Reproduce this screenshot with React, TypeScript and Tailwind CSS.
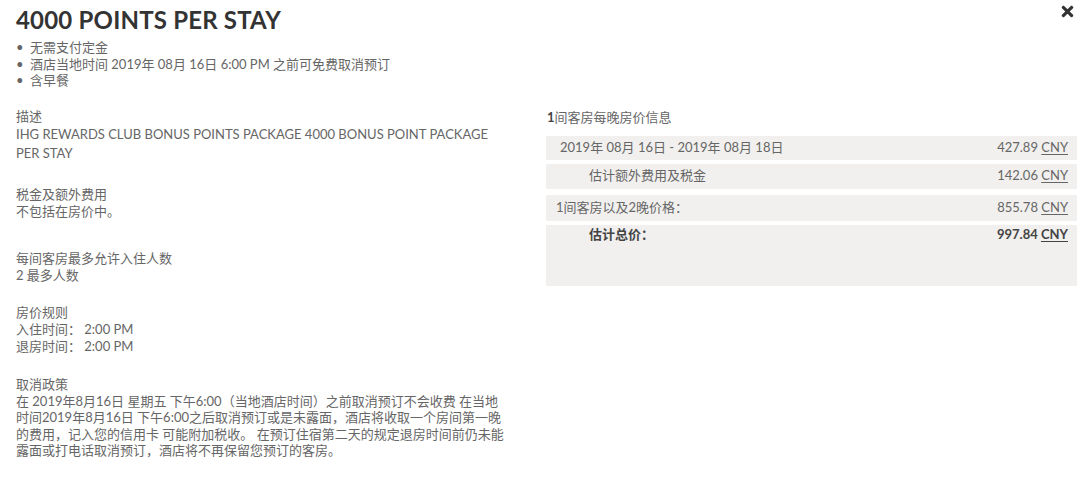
import React from "react";
import { FaTimes } from "react-icons/fa";

const font = {
  fontFamily:
    '"Lato", "Noto Sans CJK SC", "Noto Sans", sans-serif',
};

function Section({ label, children, className = "" }: { label: string; children: React.ReactNode; className?: string }) {
  return (
    <div className={className}>
      <div className="leading-[17px]">{label}</div>
      {children}
    </div>
  );
}

function PriceRow({
  label,
  amount,
  className,
  labelClass,
  bold = false,
}: {
  label: React.ReactNode;
  amount: string;
  className: string;
  labelClass: string;
  bold?: boolean;
}) {
  return (
    <div className={`flex justify-between bg-[#f1f0ee] pr-[9px] ${className}`}>
      <span className={labelClass}>{label}</span>
      <span className={bold ? "font-bold text-[#444]" : ""}>
        {amount} <span className="underline underline-offset-2">CNY</span>
      </span>
    </div>
  );
}

export default function App() {
  return (
    <div
      className="w-[1080px] h-[477px] bg-white text-[13px] text-[#666] relative overflow-hidden"
      style={font}
    >
      <button className="absolute right-[4px] top-[3px] text-[#333]">
        <FaTimes size={17} />
      </button>

      <div className="pl-4 pt-[5px]">
        <h1 className="text-[24px] leading-[30px] font-bold text-[#333] tracking-[0.2px]">4000 POINTS PER STAY</h1>
        <ul className="mt-[4px] leading-[16.5px]">
          <li className="flex"><span className="w-[14px]">•</span>无需支付定金</li>
          <li className="flex"><span className="w-[14px]">•</span>酒店当地时间 2019年 08月 16日 6:00 PM 之前可免费取消预订</li>
          <li className="flex"><span className="w-[14px]">•</span>含早餐</li>
        </ul>
      </div>

      <div className="flex pl-4 pr-[3px] mt-[19px]">
        <div className="w-[530px] pr-[40px]">
          <Section label="描述">
            <div className="leading-[19px]">
              IHG REWARDS CLUB BONUS POINTS PACKAGE 4000 BONUS POINT PACKAGE PER STAY
            </div>
          </Section>
          <Section label="税金及额外费用" className="mt-[23px] leading-[17px]">
            <div>不包括在房价中。</div>
          </Section>
          <Section label="每间客房最多允许入住人数" className="mt-[30px] leading-[17px]">
            <div>2 最多人数</div>
          </Section>
          <Section label="房价规则" className="mt-[20px] leading-[17px]">
            <div>入住时间： 2:00 PM</div>
            <div>退房时间： 2:00 PM</div>
          </Section>
          <Section label="取消政策" className="mt-[21px] leading-[16.5px]">
            <div>
              在 2019年8月16日 星期五 下午6:00（当地酒店时间）之前取消预订不会收费 在当地
              <br />
              时间2019年8月16日 下午6:00之后取消预订或是未露面，酒店将收取一个房间第一晚
              <br />
              的费用，记入您的信用卡 可能附加税收。 在预订住宿第二天的规定退房时间前仍未能
              <br />
              露面或打电话取消预订，酒店将不再保留您预订的客房。
            </div>
          </Section>
        </div>

        <div className="flex-1 pt-px">
          <div className="leading-[17px] ml-px">
            <span className="font-bold text-[#444]">1</span>间客房每晚房价信息
          </div>
          <div className="mt-[10px] flex flex-col">
            <PriceRow
              label="2019年 08月 16日 - 2019年 08月 18日"
              amount="427.89"
              className="h-[24px] items-center"
              labelClass="pl-[14px]"
            />
            <PriceRow
              label="估计额外费用及税金"
              amount="142.06"
              className="mt-[4px] h-[25px] items-center"
              labelClass="pl-[43px]"
            />
            <PriceRow
              label="1间客房以及2晚价格："
              amount="855.78"
              className="mt-[6px] h-[26px] items-center"
              labelClass="pl-[10px]"
            />
            <PriceRow
              label="估计总价："
              amount="997.84"
              className="mt-[4px] h-[61px] items-start"
              labelClass="pl-[43px] font-bold text-[#444]"
              bold
            />
          </div>
        </div>
      </div>
    </div>
  );
}
